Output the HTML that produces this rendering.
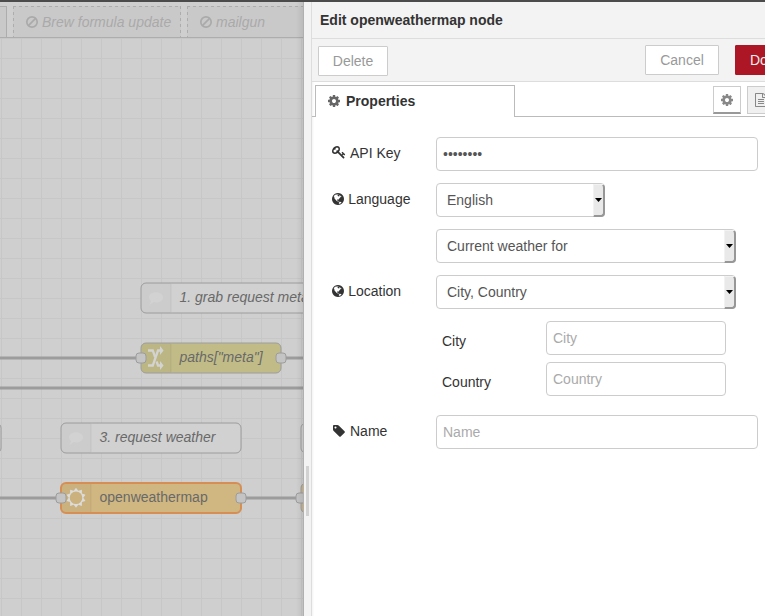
<!DOCTYPE html>
<html>
<head>
<meta charset="utf-8">
<title>Node-RED</title>
<style>
html,body{margin:0;padding:0;}
body{width:765px;height:616px;overflow:hidden;position:relative;background:#cfcfcf;font-family:"Liberation Sans",Arial,sans-serif;font-size:14px;color:#333;}
*{box-sizing:border-box;}
.abs{position:absolute;}
#topbar{left:0;top:0;width:765px;height:2px;background:#4b4b4b;}
/* workspace */
#ws{left:0;top:2px;width:303px;height:614px;overflow:hidden;background:#cfcfcf;}
#tabs{left:0;top:0;width:304px;height:36px;background:#cfcfcf;border-bottom:1px solid #adadad;}
.wtab{position:absolute;top:4px;height:31px;background-color:#c9c9c9;color:#aaa;font-style:italic;font-size:14px;line-height:32px;white-space:nowrap;
 background-image:repeating-linear-gradient(to right,#adadad 0,#adadad 3px,transparent 3px,transparent 6px),repeating-linear-gradient(to bottom,#adadad 0,#adadad 3px,transparent 3px,transparent 6px),repeating-linear-gradient(to bottom,#adadad 0,#adadad 3px,transparent 3px,transparent 6px);
 background-size:100% 1px,1px 100%,1px 100%;background-position:0 0,0 0,100% 0;background-repeat:no-repeat;}
.wtab.solid{background-image:none;border:1px solid #adadad;border-bottom:none;}
.wtab svg{position:absolute;left:12px;top:9px;}
.wtab span{position:absolute;left:29px;top:0;}
#chart{left:0;top:36px;width:304px;height:578px;
 background-color:#cfcfcf;
 background-image:linear-gradient(to right,#c7c7c7 1px,transparent 1px),linear-gradient(to bottom,#c7c7c7 1px,transparent 1px);
 background-size:20px 20px;background-position:1px 0px;}
#chart svg{position:absolute;left:0;top:0;}
/* tray */
#shadow{left:296px;top:2px;width:7px;height:614px;background:linear-gradient(to right,rgba(0,0,0,0),rgba(0,0,0,0.07));}
#wsborder{left:303px;top:2px;width:1px;height:614px;background:#b0b0b0;}
#handle{left:304px;top:2px;width:7px;height:614px;background:#f3f3f3;}
#trayborder{left:311px;top:2px;width:1px;height:614px;background:#ddd;}
#tray{left:312px;top:2px;width:453px;height:614px;background:#fff;overflow:hidden;}
#thead{left:0;top:0;width:453px;height:37px;background:#f3f3f3;border-bottom:1px solid #ddd;font-weight:bold;font-size:14px;line-height:36px;padding-left:8px;color:#333;}
#tbar{left:0;top:37px;width:453px;height:43px;background:#f3f3f3;border-bottom:1px solid #ddd;}
.btn{position:absolute;height:30px;border:1px solid #ccc;background:#fff;color:#999;font-size:14px;line-height:28px;text-align:center;border-radius:1px;}
.btn.primary{background:#AD1625;border-color:#AD1625;color:#eee;}
#ptab{left:3px;top:83px;width:200px;height:32px;border:1px solid #bbb;border-bottom:none;background:#fff;font-weight:bold;font-size:14px;line-height:31px;}
#ptabline{left:0px;top:114px;width:453px;height:1px;background:#bbb;}
.ibtn{position:absolute;top:84px;height:28px;width:28px;border:1px solid #ccc;background:#fff;}
label.l{position:absolute;font-size:14px;line-height:20px;color:#333;white-space:nowrap;}
.inp{position:absolute;height:34px;border:1px solid #ccc;border-radius:4px;background:#fff;font-size:14px;line-height:32px;padding-left:6px;color:#555;white-space:nowrap;overflow:hidden;}
.ph{color:#aaa;}
.sel{position:absolute;height:34px;border:1px solid #ccc;border-radius:4px;background:#fff;font-size:14px;line-height:32px;padding-left:10px;color:#555;white-space:nowrap;}
.sel i{position:absolute;right:-1px;top:0px;width:12px;height:33px;background:#e9e9e9;border-right:2px solid #979797;border-bottom:2px solid #979797;border-top:1px solid #f2f2f2;border-left:1px solid #f2f2f2;border-radius:0 4px 4px 0;}
.sel i:after{content:"";position:absolute;left:1px;top:13px;width:7px;height:4px;background:#000;clip-path:polygon(0 0,100% 0,50% 100%);}
.ic{position:absolute;}
</style>
</head>
<body>
<div id="topbar" class="abs"></div>

<div id="ws" class="abs">
  <div id="tabs" class="abs">
    <div class="wtab solid" style="left:-20px;width:27px;"></div>
    <div class="wtab" style="left:13px;width:168px;"><svg width="14" height="14" viewBox="0 0 14 14"><circle cx="7" cy="7" r="5.200" fill="none" stroke="#aaa" stroke-width="1.700"/><path d="M3.400 10.600L10.600 3.400" stroke="#aaa" stroke-width="1.700"/></svg><span>Brew formula update</span></div>
    <div class="wtab" style="left:187px;width:130px;"><svg width="14" height="14" viewBox="0 0 14 14"><circle cx="7" cy="7" r="5.200" fill="none" stroke="#aaa" stroke-width="1.700"/><path d="M3.400 10.600L10.600 3.400" stroke="#aaa" stroke-width="1.700"/></svg><span>mailgun</span></div>
  </div>
  <div id="chart" class="abs">
    <svg width="304" height="578" viewBox="0 38 304 578" font-family="Liberation Sans, Arial, sans-serif" font-size="14">
      <!-- wires -->
      <path d="M0 358H136" stroke="#9c9c9c" stroke-width="3" fill="none"/>
      <path d="M286 358H304" stroke="#9c9c9c" stroke-width="3" fill="none"/>
      <path d="M0 388H304" stroke="#9c9c9c" stroke-width="3" fill="none"/>
      <path d="M0 498H56" stroke="#9c9c9c" stroke-width="3" fill="none"/>
      <path d="M246 498H296" stroke="#9c9c9c" stroke-width="3" fill="none"/>

      <!-- comment node 1 -->
      <g transform="translate(141,283)">
        <rect width="180" height="30" rx="5" fill="#d1d1d1" stroke="#9c9c9c"/>
        <path d="M5 0.500h25v29h-25a4.500 4.500 0 0 1 -4.500 -4.500v-20a4.500 4.500 0 0 1 4.500 -4.500z" fill="#000" fill-opacity="0.022"/>
        <path d="M30 1v28" stroke="#000" stroke-opacity="0.06" fill="none"/>
        <path d="M15 9.300c3.900 0 7 2.300 7 5.100s-3.100 5.100-7 5.100c-.9 0-1.800-.1-2.600-.400c-1.200 1.300-2.700 2.400-4.400 3.200c1-1.300 1.700-2.700 2-4.300c-1.200-.9-2-2.200-2-3.600c0-2.800 3.100-5.100 7-5.100z" fill="#fff" fill-opacity="0.13"/>
        <text x="38.500" y="19" font-style="italic" fill="#696969">1. grab request meta</text>
      </g>
      <!-- change node -->
      <g transform="translate(141,343)">
        <rect width="140" height="30" rx="5" fill="#c1bc87" stroke="#9c9c9c"/>
        <path d="M5 0.500h25v29h-25a4.500 4.500 0 0 1 -4.500 -4.500v-20a4.500 4.500 0 0 1 4.500 -4.500z" fill="#000" fill-opacity="0.028"/>
        <path d="M30 1v28" stroke="#000" stroke-opacity="0.06" fill="none"/>
        <g fill="none" stroke="#d3d3d1" stroke-width="2.300">
          <path d="M7 7.500h4.800l2.300 6.500"/>
          <path d="M15.600 18.500l1.400 4h2.500"/>
          <path d="M7 22.500h4.800l5.200 -15h2.500"/>
        </g>
        <path d="M19 3l3.600 4.500l-3.600 4.500z M19 18l3.600 4.500l-3.600 4.500z" fill="#d3d3d1"/>
        <text x="38.500" y="19" font-style="italic" fill="#696969">paths["meta"]</text>
        <rect x="-5" y="10" width="10" height="10" rx="3" fill="#c4c4c4" stroke="#9c9c9c"/>
        <rect x="135" y="10" width="10" height="10" rx="3" fill="#c4c4c4" stroke="#9c9c9c"/>
      </g>
      <!-- comment node 3 -->
      <g transform="translate(61,423)">
        <rect width="180" height="30" rx="5" fill="#d1d1d1" stroke="#9c9c9c"/>
        <path d="M5 0.500h25v29h-25a4.500 4.500 0 0 1 -4.500 -4.500v-20a4.500 4.500 0 0 1 4.500 -4.500z" fill="#000" fill-opacity="0.022"/>
        <path d="M30 1v28" stroke="#000" stroke-opacity="0.06" fill="none"/>
        <path d="M15 9.300c3.900 0 7 2.300 7 5.100s-3.100 5.100-7 5.100c-.9 0-1.800-.1-2.600-.400c-1.200 1.300-2.700 2.400-4.400 3.200c1-1.300 1.700-2.700 2-4.300c-1.200-.9-2-2.200-2-3.600c0-2.800 3.100-5.100 7-5.100z" fill="#fff" fill-opacity="0.13"/>
        <text x="38.500" y="19" font-style="italic" fill="#696969">3. request weather</text>
      </g>
      <!-- owm node -->
      <g transform="translate(61,483)">
        <rect width="180" height="30" rx="5" fill="#d0b781" stroke="#d68e55" stroke-width="2"/>
        <path d="M5 1h25v28h-25a4 4 0 0 1 -4 -4v-20a4 4 0 0 1 4 -4z" fill="#000" fill-opacity="0.028"/>
        <path d="M30 1v28" stroke="#000" stroke-opacity="0.06" fill="none"/>
        <path d="M15.00 4.80L17.26 7.86L20.88 6.71L20.91 10.51L24.51 11.71L22.30 14.80L24.51 17.89L20.91 19.09L20.88 22.89L17.26 21.74L15.00 24.80L12.74 21.74L9.12 22.89L9.09 19.09L5.49 17.89L7.70 14.80L5.49 11.71L9.09 10.51L9.12 6.71L12.74 7.86Z M21.300 14.800a6.300 6.300 0 1 0 -12.600 0a6.300 6.300 0 1 0 12.600 0Z" fill="#dcdcdc" fill-rule="evenodd"/>
        <text x="38.500" y="19" fill="#696969">openweathermap</text>
        <rect x="-5" y="10" width="10" height="10" rx="3" fill="#c4c4c4" stroke="#9c9c9c"/>
        <rect x="175" y="10" width="10" height="10" rx="3" fill="#c4c4c4" stroke="#9c9c9c"/>
      </g>
      <!-- partial nodes -->
      <rect x="-20" y="423" width="21" height="30" rx="5" fill="#d1d1d1" stroke="#9c9c9c"/>
      <rect x="301" y="423" width="40" height="30" rx="5" fill="#d1d1d1" stroke="#9c9c9c"/>
      <rect x="301" y="483" width="40" height="30" rx="5" fill="#d0b781" stroke="#9c9c9c"/>
      <rect x="296" y="493" width="10" height="10" rx="3" fill="#c4c4c4" stroke="#9c9c9c"/>
    </svg>
  </div>
</div>

<div id="shadow" class="abs"></div>
<div id="wsborder" class="abs"></div>
<div id="handle" class="abs"></div>
<div id="trayborder" class="abs"></div>
<div class="abs" style="left:306px;top:466px;width:3px;height:50px;background:#d2d2d2;"></div>

<div id="tray" class="abs">
  <div class="abs" style="left:0;top:80px;width:2px;height:534px;background:linear-gradient(to right,#f4f4f4,#fdfdfd);"></div>
  <div id="thead" class="abs">Edit openweathermap node</div>
  <div id="tbar" class="abs">
    <div class="btn" style="left:6px;top:7px;width:70px;">Delete</div>
    <div class="btn" style="left:333px;top:6px;width:74px;">Cancel</div>
    <div class="btn primary" style="left:423px;top:6px;width:60px;text-align:left;padding-left:14px;">Done</div>
  </div>
  <div id="ptabline" class="abs"></div>
  <div id="ptab" class="abs"><svg class="ic" style="left:11px;top:8px" width="14" height="14" viewBox="0 0 1792 1792"><path fill="#666" d="M1152 896q0-106-75-181t-181-75-181 75-75 181 75 181 181 75 181-75 75-181zm512-109v222q0 12-8 23t-20 13l-185 28q-19 54-39 91 35 50 107 138 10 12 10 25t-9 23q-27 37-99 108t-94 71q-12 0-26-9l-138-108q-44 23-91 38-16 136-29 186-7 28-36 28h-222q-14 0-24.500-8.500t-11.500-21.500l-28-184q-49-16-90-37l-141 107q-10 9-25 9-14 0-25-11-126-114-165-168-7-10-7-23 0-12 8-23 15-21 51-66.500t54-70.500q-27-50-41-99l-183-27q-13-2-21-12.500t-8-23.500v-222q0-12 8-23t19-13l186-28q14-46 39-92-40-57-107-138-10-12-10-24 0-10 9-23 26-36 98.500-107.500t94.500-71.500q13 0 26 10l138 107q44-23 91-38 16-136 29-186 7-28 36-28h222q14 0 24.500 8.500t11.500 21.500l28 184q49 16 90 37l142-107q9-9 24-9 13 0 25 10 129 119 165 170 7 8 7 22 0 12-8 23-15 21-51 66.500t-54 70.500q26 50 41 98l183 28q13 2 21 12.500t8 23.500z"/></svg><span style="position:absolute;left:30px;top:0;">Properties</span></div>
  <div class="ibtn" style="left:401px;border-bottom:2px solid #999;"><svg class="ic" style="left:6px;top:6px" width="14" height="14" viewBox="0 0 1792 1792"><path fill="#888" d="M1152 896q0-106-75-181t-181-75-181 75-75 181 75 181 181 75 181-75 75-181zm512-109v222q0 12-8 23t-20 13l-185 28q-19 54-39 91 35 50 107 138 10 12 10 25t-9 23q-27 37-99 108t-94 71q-12 0-26-9l-138-108q-44 23-91 38-16 136-29 186-7 28-36 28h-222q-14 0-24.500-8.500t-11.500-21.500l-28-184q-49-16-90-37l-141 107q-10 9-25 9-14 0-25-11-126-114-165-168-7-10-7-23 0-12 8-23 15-21 51-66.500t54-70.500q-27-50-41-99l-183-27q-13-2-21-12.500t-8-23.500v-222q0-12 8-23t19-13l186-28q14-46 39-92-40-57-107-138-10-12-10-24 0-10 9-23 26-36 98.500-107.500t94.500-71.500q13 0 26 10l138 107q44-23 91-38 16-136 29-186 7-28 36-28h222q14 0 24.500 8.500t11.500 21.500l28 184q49 16 90 37l142-107q9-9 24-9 13 0 25 10 129 119 165 170 7 8 7 22 0 12-8 23-15 21-51 66.500t-54 70.500q26 50 41 98l183 28q13 2 21 12.500t8 23.500z"/></svg></div>
  <div class="ibtn" style="left:435px;background:#f0f0f0;"><svg class="ic" style="left:6px;top:6px" width="14" height="14" viewBox="0 0 1792 1792"><path fill="#888" d="M1596 380q28 28 48 76t20 88v1152q0 40-28 68t-68 28h-1344q-40 0-68-28t-28-68v-1600q0-40 28-68t68-28h896q40 0 88 20t76 48zm-444-244v376h376q-10-29-22-41l-313-313q-12-12-41-22zm384 1528v-1024h-416q-40 0-68-28t-28-68v-416h-768v1536h1280zm-1024-864q0-14 9-23t23-9h704q14 0 23 9t9 23v64q0 14-9 23t-23 9h-704q-14 0-23-9t-9-23v-64zm736 224q14 0 23 9t9 23v64q0 14-9 23t-23 9h-704q-14 0-23-9t-9-23v-64q0-14 9-23t23-9h704zm0 256q14 0 23 9t9 23v64q0 14-9 23t-23 9h-704q-14 0-23-9t-9-23v-64q0-14 9-23t23-9h704z"/></svg></div>

  <svg class="ic" style="left:20px;top:143px" width="14" height="14" viewBox="0 0 1792 1792"><path fill="#333" d="M832 512q0-80-56-136t-136-56-136 56-56 136q0 42 19 83-41-19-83-19-80 0-136 56t-56 136 56 136 136 56 136-56 56-136q0-42-19-83 41 19 83 19 80 0 136-56t56-136zm851 704q0 17-49 66t-66 49q-9 0-28.500-16t-36.500-33-38.500-40-24.500-26l-96 96 220 220q28 28 28 68 0 42-39 81t-81 39q-40 0-68-28l-671-671q-176 131-365 131-163 0-265.500-102.500t-102.500-265.500q0-160 95-313t248-248 313-95q163 0 265.500 102.500t102.500 265.500q0 189-131 365l355 355 96-96q-3-3-26-24.500t-40-38.500-33-36.500-16-28.500q0-17 49-66t66-49q13 0 23 10 6 6 46 44.500t82 79.500 86.500 86 73 78 28.500 41z"/></svg><label class="l" style="left:38px;top:141px;">API Key</label>
  <div class="inp" style="left:124px;top:135px;width:322px;">••••••••</div>

  <svg class="ic" style="left:19px;top:190px" width="14" height="14" viewBox="0 0 1792 1792"><path fill="#333" d="M896 128q209 0 385.500 103t279.500 279.500 103 385.500-103 385.500-279.500 279.500-385.500 103-385.500-103-279.500-279.500-103-385.500 103-385.500 279.500-279.500 385.500-103zm274 521q-2 1-9.500 9.500t-13.500 9.500q2 0 4.500-5t5-11 3.500-7q6-7 22-15 14-6 52-12 34-8 51 11-2-2 9.500-13t14.500-12q3-2 15-4.500t15-7.500l2-22q-12 1-17.500-7t-6.500-21q0 2-6 8 0-7-4.500-8t-11.500 1-9 1q-10-3-15-7.500t-8-16.500-4-15q-2-5-9.500-11t-9.500-10q-1-2-2.500-5.500t-3-6.500-4-5.500-5.500-2.500-7 5-7.500 10-4.500 5q-3-2-6-1.500t-4.500 1-4.500 3-5 3.500q-3 2-8.500 3t-8.500 2q15-5-1-11-10-4-16-3 9-4 7.500-12t-8.500-14h5q-1-4-8.500-8.500t-17.500-8.500-13-6q-8-5-34-9.500t-33-.5q-5 6-4.500 10.500t4 14 3.500 12.500q1 6-5.500 13t-6.500 12q0 7 14 15.500t10 21.500q-3 8-16 16t-16 12q-5 8-1.500 18.500t10.500 16.500q2 2 1.500 4t-3.500 4.500-5.500 4-6.500 3.500l-3 2q-11 5-20.500-6t-13.500-26q-7-25-16-30-23-8-29 1-5-13-41-26-25-9-58-4 6-1 0-15-7-15-19-12 3-6 4-17.500t1-13.500q3-13 12-23 1-1 7-8.500t9.500-13.500.5-6q35 4 50-11 5-5 11.500-17t10.500-17q9-6 14-5.500t14.500 5.500 14.500 5q14 1 15.500-11t-7.500-20q12 1 3-17-4-7-8-9-12-4-27 5-8 4 2 8-1-1-9.500 10.500t-16.500 17.500-16-5q-1-1-5.500-13.500t-9.500-13.500q-8 0-16 15 3-8-11-15t-24-8q19-12-8-27-7-4-20.500-5t-19.500 4q-5 7-5.500 11.500t5 8 10.500 5.500 11.500 4 8.500 3q14 10 8 14-2 1-8.500 3.500t-11.500 4.500-6 4q-3 4 0 14t-2 14q-5-5-9-17.500t-7-16.500q7 9-25 6l-10-1q-4 0-16 2t-20.500 1-13.500-8q-4-8 0-20 1-4 4-2-4-3-11-9.500t-10-8.500q-46 15-94 41 6 1 12-1 5-2 13-6.500t10-5.500q34-14 42-7l5-5q14 16 20 25-7-4-30-1-20 6-22 12 7 12 5 18-4-3-11.500-10t-14.500-11-15-5q-16 0-22 1-146 80-235 222 7 7 12 8 4 1 5 9t2.500 11 11.500-3q9 8 3 19 1-1 44 27 19 17 21 21 3 11-10 18-1-2-9-9t-9-4q-3 5 .5 18.500t10.500 12.500q-7 0-9.500 16t-2.500 35.500-1 23.500l2 1q-3 12 5.500 34.500t21.500 19.500q-13 3 20 43 6 8 8 9 3 2 12 7.500t15 10 10 10.500q4 5 10 22.500t14 23.500q-2 6 9.500 20t10.500 23q-1 0-2.500 1t-2.500 1q3 7 15.500 14t15.500 13q1 3 2 10t3 11 8 2q2-20-24-62-15-25-17-29-3-5-5.500-15.500t-4.500-14.500q2 0 6 1.500t8.500 3.500 7.500 4 2 3q-3 7 2 17.500t12 18.500 17 19 12 13q6 6 14 19.500t0 13.500q9 0 20 10.500t17 19.500q5 8 8 26t5 24q2 7 8.500 13.500t12.500 9.500l16 8 13 7q5 2 18.500 10.500t21.500 11.500q10 4 16 4t14.500-2.500 13.500-3.500q15-2 29 15t21 21q36 19 55 11-2 1 .5 7.500t8 15.500 9 14.500 5.500 8.500q5 6 18 15t18 15q6-4 7-9-3 8 7 20t18 10q14-3 14-32-31 15-49-18 0-1-2.500-5.500t-4-8.500-2.500-8.500 0-7.500 5-3q9 0 10-3.500t-2-12.500-4-13q-1-8-11-20t-12-15q-5 9-16 8t-16-9q0 1-1.500 5.500t-1.500 6.500q-13 0-15-1 1-3 2.500-17.500t3.500-22.500q1-4 5.500-12t7.500-14.500 4-12.500-4.500-9.500-17.500-2.500q-19 1-26 20-1 3-3 10.500t-5 11.500-9 7q-7 3-24 2t-24-5q-13-8-22.500-29t-9.500-37q0-10 2.500-26.500t3-25-5.500-24.500q3-2 9-9.500t10-10.500q2-1 4.500-1.500t4.500 0 4-1.500 3-6q-1-1-4-3-3-3-4-3 7 3 28.500-1.500t27.500 1.500q15 11 22-2 0-1-2.500-9.500t-.5-13.500q5 27 29 9 3 3 15.500 5t17.500 5q3 2 7 5.500t5.500 4.500 5-.5 8.500-6.500q10 14 12 24 11 40 19 44 7 3 11 2t4.500-9.500 0-14-1.500-12.500l-1-8v-18l-1-8q-15-3-18.500-12t1.500-18.500 15-18.500q1-1 8-3.500t15.500-6.500 12.500-8q21-19 15-35 7 0 11-9-1 0-5-3t-7.500-5-4.500-2q9-5 2-16 5-3 7.500-11t7.500-10q9 12 21 2 7-8 1-16 5-7 20.500-10.500t18.500-9.500q7 2 8-2t1-12 3-12q4-5 15-9t13-5l17-11q3-4 0-4 18 2 31-11 10-11-6-20 3-6-3-9.500t-15-5.500q3-1 11.500-.5t10.500-1.500q15-10-7-16-17-5-43 12zm-163 877q206-36 351-189-3-3-12.500-4.500t-12.500-3.500q-18-7-24-8 1-7-2.500-13t-8-9-12.500-8-11-7q-2-2-7-6t-7-5.500-7.500-4.500-8.500-2-10 1l-3 1q-3 1-5.500 2.500t-5.500 3-4 3 0 2.500q-21-17-36-22-5-1-11-5.500t-10.500-7-10-1.500-11.500 7q-5 5-6 15t-2 13q-7-5 0-17.500t2-18.500q-3-6-10.500-4.500t-12 4.500-11.500 8.500-9 6.500-8.500 5.500-8.500 7.500q-3 4-6 12t-5 11q-2-4-11.500-6.500t-9.500-5.500q2 10 4 35t5 38q7 31-12 48-27 25-29 40-4 22 12 26 0 7-8 20.500t-7 21.500q0 6 2 16z"/></svg><label class="l" style="left:36.200px;top:187px;">Language</label>
  <div class="sel" style="left:124px;top:181px;width:169px;">English<i></i></div>
  <div class="sel" style="left:124px;top:227px;width:300px;">Current weather for<i></i></div>

  <svg class="ic" style="left:19px;top:282px" width="14" height="14" viewBox="0 0 1792 1792"><path fill="#333" d="M896 128q209 0 385.500 103t279.500 279.500 103 385.500-103 385.500-279.500 279.500-385.500 103-385.500-103-279.500-279.500-103-385.500 103-385.500 279.500-279.500 385.500-103zm274 521q-2 1-9.500 9.500t-13.500 9.500q2 0 4.500-5t5-11 3.500-7q6-7 22-15 14-6 52-12 34-8 51 11-2-2 9.500-13t14.500-12q3-2 15-4.500t15-7.500l2-22q-12 1-17.500-7t-6.500-21q0 2-6 8 0-7-4.500-8t-11.500 1-9 1q-10-3-15-7.500t-8-16.500-4-15q-2-5-9.500-11t-9.500-10q-1-2-2.500-5.500t-3-6.500-4-5.500-5.500-2.500-7 5-7.500 10-4.500 5q-3-2-6-1.500t-4.500 1-4.500 3-5 3.500q-3 2-8.500 3t-8.500 2q15-5-1-11-10-4-16-3 9-4 7.500-12t-8.500-14h5q-1-4-8.500-8.500t-17.500-8.500-13-6q-8-5-34-9.500t-33-.5q-5 6-4.500 10.500t4 14 3.500 12.500q1 6-5.500 13t-6.500 12q0 7 14 15.500t10 21.500q-3 8-16 16t-16 12q-5 8-1.500 18.500t10.500 16.500q2 2 1.500 4t-3.500 4.500-5.500 4-6.500 3.500l-3 2q-11 5-20.500-6t-13.500-26q-7-25-16-30-23-8-29 1-5-13-41-26-25-9-58-4 6-1 0-15-7-15-19-12 3-6 4-17.500t1-13.500q3-13 12-23 1-1 7-8.500t9.500-13.500.5-6q35 4 50-11 5-5 11.500-17t10.500-17q9-6 14-5.500t14.500 5.500 14.500 5q14 1 15.500-11t-7.500-20q12 1 3-17-4-7-8-9-12-4-27 5-8 4 2 8-1-1-9.500 10.500t-16.500 17.500-16-5q-1-1-5.500-13.500t-9.500-13.500q-8 0-16 15 3-8-11-15t-24-8q19-12-8-27-7-4-20.500-5t-19.500 4q-5 7-5.500 11.500t5 8 10.500 5.500 11.500 4 8.500 3q14 10 8 14-2 1-8.500 3.500t-11.500 4.500-6 4q-3 4 0 14t-2 14q-5-5-9-17.500t-7-16.500q7 9-25 6l-10-1q-4 0-16 2t-20.500 1-13.500-8q-4-8 0-20 1-4 4-2-4-3-11-9.500t-10-8.500q-46 15-94 41 6 1 12-1 5-2 13-6.500t10-5.500q34-14 42-7l5-5q14 16 20 25-7-4-30-1-20 6-22 12 7 12 5 18-4-3-11.500-10t-14.500-11-15-5q-16 0-22 1-146 80-235 222 7 7 12 8 4 1 5 9t2.500 11 11.500-3q9 8 3 19 1-1 44 27 19 17 21 21 3 11-10 18-1-2-9-9t-9-4q-3 5 .5 18.500t10.500 12.500q-7 0-9.500 16t-2.500 35.500-1 23.500l2 1q-3 12 5.500 34.500t21.500 19.500q-13 3 20 43 6 8 8 9 3 2 12 7.500t15 10 10 10.500q4 5 10 22.500t14 23.500q-2 6 9.500 20t10.500 23q-1 0-2.500 1t-2.500 1q3 7 15.500 14t15.500 13q1 3 2 10t3 11 8 2q2-20-24-62-15-25-17-29-3-5-5.500-15.500t-4.500-14.500q2 0 6 1.500t8.500 3.500 7.500 4 2 3q-3 7 2 17.500t12 18.500 17 19 12 13q6 6 14 19.500t0 13.500q9 0 20 10.500t17 19.500q5 8 8 26t5 24q2 7 8.500 13.500t12.500 9.500l16 8 13 7q5 2 18.500 10.500t21.500 11.500q10 4 16 4t14.500-2.500 13.500-3.500q15-2 29 15t21 21q36 19 55 11-2 1 .5 7.500t8 15.500 9 14.500 5.500 8.500q5 6 18 15t18 15q6-4 7-9-3 8 7 20t18 10q14-3 14-32-31 15-49-18 0-1-2.500-5.500t-4-8.500-2.500-8.500 0-7.500 5-3q9 0 10-3.500t-2-12.500-4-13q-1-8-11-20t-12-15q-5 9-16 8t-16-9q0 1-1.500 5.500t-1.500 6.500q-13 0-15-1 1-3 2.500-17.500t3.500-22.500q1-4 5.500-12t7.500-14.500 4-12.500-4.500-9.500-17.500-2.500q-19 1-26 20-1 3-3 10.500t-5 11.500-9 7q-7 3-24 2t-24-5q-13-8-22.500-29t-9.500-37q0-10 2.500-26.500t3-25-5.500-24.500q3-2 9-9.500t10-10.500q2-1 4.500-1.500t4.500 0 4-1.500 3-6q-1-1-4-3-3-3-4-3 7 3 28.500-1.500t27.500 1.500q15 11 22-2 0-1-2.500-9.500t-.5-13.500q5 27 29 9 3 3 15.500 5t17.500 5q3 2 7 5.500t5.500 4.500 5-.5 8.500-6.500q10 14 12 24 11 40 19 44 7 3 11 2t4.500-9.500 0-14-1.500-12.500l-1-8v-18l-1-8q-15-3-18.500-12t1.500-18.500 15-18.500q1-1 8-3.500t15.500-6.500 12.500-8q21-19 15-35 7 0 11-9-1 0-5-3t-7.500-5-4.500-2q9-5 2-16 5-3 7.500-11t7.500-10q9 12 21 2 7-8 1-16 5-7 20.500-10.500t18.500-9.500q7 2 8-2t1-12 3-12q4-5 15-9t13-5l17-11q3-4 0-4 18 2 31-11 10-11-6-20 3-6-3-9.500t-15-5.500q3-1 11.500-.5t10.500-1.500q15-10-7-16-17-5-43 12zm-163 877q206-36 351-189-3-3-12.500-4.500t-12.500-3.500q-18-7-24-8 1-7-2.500-13t-8-9-12.500-8-11-7q-2-2-7-6t-7-5.500-7.500-4.500-8.500-2-10 1l-3 1q-3 1-5.500 2.500t-5.500 3-4 3 0 2.500q-21-17-36-22-5-1-11-5.500t-10.500-7-10-1.500-11.500 7q-5 5-6 15t-2 13q-7-5 0-17.500t2-18.500q-3-6-10.500-4.500t-12 4.500-11.500 8.500-9 6.500-8.500 5.500-8.500 7.500q-3 4-6 12t-5 11q-2-4-11.500-6.500t-9.500-5.500q2 10 4 35t5 38q7 31-12 48-27 25-29 40-4 22 12 26 0 7-8 20.500t-7 21.500q0 6 2 16z"/></svg><label class="l" style="left:36.200px;top:279px;">Location</label>
  <div class="sel" style="left:124px;top:273px;width:300px;">City, Country<i></i></div>

  <label class="l" style="left:130px;top:329px;">City</label>
  <div class="inp ph" style="left:234px;top:319px;width:180px;">City</div>
  <label class="l" style="left:130px;top:370px;">Country</label>
  <div class="inp ph" style="left:234px;top:360px;width:180px;">Country</div>

  <svg class="ic" style="left:20px;top:421.5px" width="14" height="14" viewBox="0 0 1792 1792"><path fill="#333" d="M576 448q0-53-37.500-90.500t-90.500-37.500-90.500 37.500-37.500 90.500 37.500 90.500 90.500 37.500 90.500-37.500 37.500-90.500zm1067 576q0 53-37 90l-491 492q-39 37-91 37-53 0-90-37l-715-716q-38-37-64.500-101t-26.500-117v-416q0-52 38-90t90-38h416q53 0 117 26.500t102 64.500l715 714q37 39 37 91z"/></svg><label class="l" style="left:38px;top:419px;">Name</label>
  <div class="inp ph" style="left:124px;top:413px;width:322px;">Name</div>
</div>
</body>
</html>
